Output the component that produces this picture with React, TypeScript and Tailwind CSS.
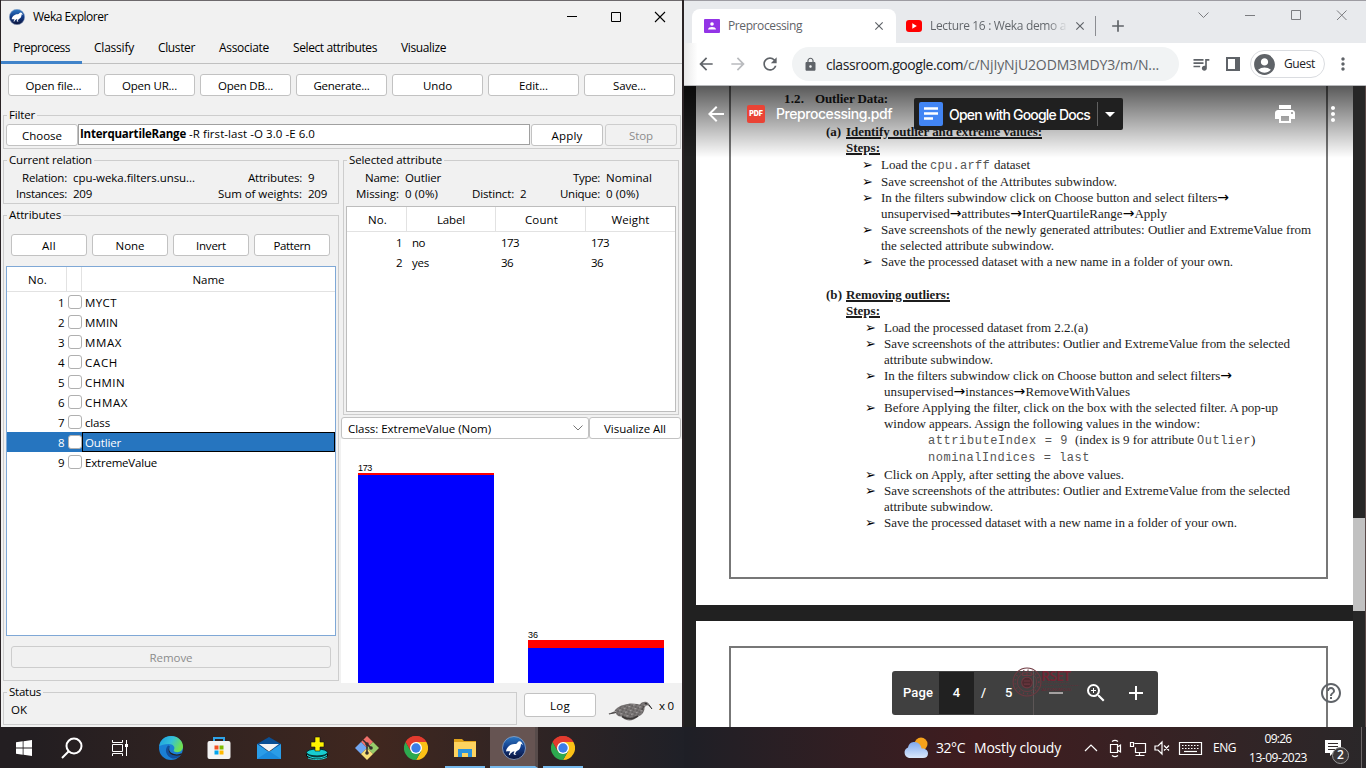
import { useLayoutEffect, useRef, useState, type ReactNode } from "react";
import {
  MdAccountCircle, MdAdd, MdArrowBack, MdArrowDropDown, MdArrowForward, MdClose, MdHelpOutline, MdLock,
  MdMoreVert, MdPrint, MdQueueMusic, MdRefresh, MdRemove, MdZoomIn,
} from "react-icons/md";

/** Text set to a given measure by adjusting its letter spacing. */
function Fit({ w, className = "", children }: { w: number; className?: string; children: string }) {
  const ref = useRef<HTMLSpanElement>(null);
  const [spacing, setSpacing] = useState(0);
  useLayoutEffect(() => {
    if (ref.current) setSpacing((w - ref.current.getBoundingClientRect().width) / children.length);
  }, [w, children]);
  return (
    <span ref={ref} className={`inline-block whitespace-pre ${className}`} style={{ letterSpacing: spacing }}>
      {children.split(/(→)/).map((part, i) =>
        part === "→" ? <span key={i} className="font-['DejaVu_Sans',sans-serif] text-[14px] leading-none text-black">→</span> : part,
      )}
    </span>
  );
}

function Btn({ w, box, disabled, children }: { w: number; box: string; disabled?: boolean; children: string }) {
  return (
    <button
      className={`flex shrink-0 items-center justify-center rounded-[3px] border pt-[2px] ${box} ${
        disabled ? "border-[#cdcdcd] bg-[#f1f1f1] text-[#8c8c8c]" : "border-[#c2c2c2] bg-white text-black"
      }`}
    >
      <Fit w={w}>{children}</Fit>
    </button>
  );
}

function Group({ title, w, box, children }: { title: string; w: number; box: string; children: ReactNode }) {
  return (
    <fieldset className={`shrink-0 border border-[#cdcdcd] ${box}`}>
      <legend className="ml-[3px] h-4 px-[2px] leading-4">
        <Fit w={w}>{title}</Fit>
      </legend>
      {children}
    </fieldset>
  );
}

function WekaMark({ className }: { className: string }) {
  return (
    <svg viewBox="0 0 24 24" className={className}>
      <defs>
        <linearGradient id="wk" x1="0" y1="0" x2="0" y2="1">
          <stop offset="0" stopColor="#2c78c4" />
          <stop offset="0.5" stopColor="#123a86" />
          <stop offset="1" stopColor="#0b1238" />
        </linearGradient>
      </defs>
      <circle cx="12" cy="12" r="11.5" fill="url(#wk)" stroke="#8fa6c8" strokeWidth="0.8" />
      <path
        d="M4 15.500c.5-4 4-7.500 8.500-7.500 1.500 0 2.500-.5 3-1.500 1-1.500 3-1.700 4-.3l1.500 2.800-2-1.200c-.3 3.200-1 6.200-4.500 7.400l-1.500 2.300 1.500 1.300h-2.500l-.5-1.300 1-2h-1.500l-2.500 2-.7 1.800-1-.5.7-2 .8-1.200c-1.300-.4-2.800-.5-4.300-.1z"
        fill="#fff"
      />
    </svg>
  );
}

const attributes = [
  ["MYCT", 32], ["MMIN", 33], ["MMAX", 37], ["CACH", 33], ["CHMIN", 40], ["CHMAX", 43], ["class", 25], ["Outlier", 36], ["ExtremeValue", 72],
] as const;

function Kv({ k, kw, v, vw, box }: { k: string; kw: number; v: string; vw: number; box: string }) {
  return (
    <div className="flex h-4 items-center">
      <div className={`mr-[6px] flex justify-end ${box}`}><Fit w={kw}>{k}</Fit></div>
      <Fit w={vw}>{v}</Fit>
    </div>
  );
}

function WekaWindow() {
  return (
    <section className="flex h-[727px] w-[684px] shrink-0 bg-[#2a2325] pl-px font-['Open_Sans',sans-serif] text-[11.5px] leading-4 text-black">
      <div className="flex w-[681px] flex-col border-t border-[#6d696c] bg-[#f1f1f1]">
        <header className="flex h-[31px] items-center pl-2">
          <WekaMark className="size-4" />
          <Fit w={75} className="ml-2 pt-px text-[12px]">Weka Explorer</Fit>
          <svg viewBox="0 0 100 12" className="ml-auto mr-[16px] h-3 w-[100px] fill-none stroke-black">
            <path d="M1 5.500h10" />
            <path d="M45.500 1.500h9v9h-9z" />
            <path d="M89 1l10 10M99 1L89 11" strokeWidth="1.100" />
          </svg>
        </header>
        <nav className="flex h-8 shrink-0 border-b border-[#c0c0c0] text-[12px]">
          <div className="-mb-px flex w-[81px] items-center justify-center border-b-3 border-[#4083c9] pt-[3px]"><Fit w={57}>Preprocess</Fit></div>
          <div className="flex items-center gap-6 pl-3 pt-px"><Fit w={40}>Classify</Fit><Fit w={37}>Cluster</Fit><Fit w={50}>Associate</Fit><Fit w={84}>Select attributes</Fit><Fit w={45}>Visualize</Fit></div>
        </nav>
        <div className="mt-[10px] flex h-[22px] shrink-0 gap-[5px] pl-[7px]">
          <Btn box="w-[91px]" w={56}>Open file...</Btn>
          <Btn box="w-[91px]" w={55}>Open UR...</Btn>
          <Btn box="w-[91px]" w={55}>Open DB...</Btn>
          <Btn box="w-[91px]" w={56}>Generate...</Btn>
          <Btn box="w-[91px]" w={29}>Undo</Btn>
          <Btn box="w-[91px]" w={29}>Edit...</Btn>
          <Btn box="w-[91px]" w={33}>Save...</Btn>
        </div>
        <Group title="Filter" w={26} box="ml-[2px] mt-[11px] h-[42px] w-[678px]">
          <div className="mt-px flex h-[22px] pl-[2px]">
            <Btn box="w-[72px]" w={40}>Choose</Btn>
            <div className="mr-px flex h-[21px] w-[452px] items-center border border-[#a0a0a0] bg-white pb-px pl-px">
              <Fit w={106} className="font-bold">InterquartileRange</Fit>
              <Fit w={126} className="ml-[3px]">-R first-last -O 3.0 -E 6.0</Fit>
            </div>
            <Btn box="w-[72px] mr-[2px]" w={31}>Apply</Btn>
            <Btn box="w-[72px]" w={24} disabled>Stop</Btn>
          </div>
        </Group>
        <div className="mt-[3px] flex h-[531px] shrink-0 pl-[2px]">
          <div className="flex w-[338px] flex-col">
            <Group title="Current relation" w={83} box="h-[52px] w-[336px]">
              <div className="flex pt-[2px]">
                <div className="w-[220px]">
                  <Kv box="w-[63px]" k="Relation:" kw={45} v="cpu-weka.filters.unsu..." vw={122} />
                  <Kv box="w-[63px]" k="Instances:" kw={51} v="209" vw={19} />
                </div>
                <div className="-ml-1">
                  <Kv box="w-[82px]" k="Attributes:" kw={54} v="9" vw={6} />
                  <Kv box="w-[82px]" k="Sum of weights:" kw={84} v="209" vw={19} />
                </div>
              </div>
            </Group>
            <Group title="Attributes" w={52} box="mt-[3px] h-[474px] w-[336px]">
              <div className="mt-[11px] flex h-[22px] gap-[5px] pl-[7px]">
                <Btn box="w-[76px]" w={14}>All</Btn>
                <Btn box="w-[76px]" w={29}>None</Btn>
                <Btn box="w-[76px]" w={30}>Invert</Btn>
                <Btn box="w-[76px]" w={37}>Pattern</Btn>
              </div>
              <div className="ml-[2px] mt-[10px] h-[370px] w-[330px] border border-[#7fa8d6] bg-white">
                <div className="flex h-[25px] border-b border-[#e2e2e2] *:flex *:items-center *:justify-center *:pt-[2px]">
                  <div className="w-[60px] border-r border-[#e2e2e2] pl-[2px]"><Fit w={19}>No.</Fit></div>
                  <div className="w-[15px] border-r border-[#e2e2e2]" />
                  <div className="flex-1"><Fit w={32}>Name</Fit></div>
                </div>
                {attributes.map(([name, w], i) => (
                  <div key={name} className={`flex h-5 items-center ${i === 7 ? "bg-[#2675bf] text-white" : ""}`}>
                    <div className="w-[57px] pt-px text-right"><Fit w={6}>{String(i + 1)}</Fit></div>
                    <div className="ml-1 h-[14px] w-[14px] rounded-[3px] border border-[#b0b0b0] bg-white" />
                    <div className={`flex h-5 flex-1 items-center border pl-[2px] pt-px ${i === 7 ? "border-black" : "border-transparent"}`}>
                      <Fit w={w}>{name}</Fit>
                    </div>
                  </div>
                ))}
              </div>
              <div className="ml-[7px] mt-[10px] flex h-[22px]"><Btn box="w-[320px]" w={43} disabled>Remove</Btn></div>
            </Group>
          </div>
          <div className="flex flex-1 flex-col">
            <Group title="Selected attribute" w={93} box="ml-[2px] h-[263px] w-[336px]">
              <div className="flex pt-[2px]">
                <div className="w-[110px]">
                  <Kv box="w-[55px]" k="Name:" kw={34} v="Outlier" vw={36} />
                  <Kv box="w-[55px]" k="Missing:" kw={43} v="0 (0%)" vw={33} />
                </div>
                <div className="w-[90px] pt-4"><Kv box="w-[60px]" k="Distinct:" kw={42} v="2" vw={6} /></div>
                <div>
                  <Kv box="w-[56px]" k="Type:" kw={27} v="Nominal" vw={46} />
                  <Kv box="w-[56px]" k="Unique:" kw={40} v="0 (0%)" vw={33} />
                </div>
              </div>
              <div className="ml-[2px] mt-1 h-[206px] w-[330px] border border-[#bdbdbd] bg-white">
                <div className="grid h-[25px] grid-cols-[60px_89px_90px_89px] border-b border-[#e2e2e2] *:flex *:items-center *:justify-center *:border-r *:border-[#e2e2e2] *:pt-[2px]">
                  <div className="pl-[2px]"><Fit w={19}>No.</Fit></div><div><Fit w={28}>Label</Fit></div><div className="pl-[2px]"><Fit w={33}>Count</Fit></div>
                  <div className="border-r-0!"><Fit w={38}>Weight</Fit></div>
                </div>
                {[["1", "no", "173", 13, 18], ["2", "yes", "36", 17, 12]].map(([n, l, c, lw, cw]) => (
                  <div key={n} className="grid h-5 grid-cols-[55px_94px_90px_89px] items-center pt-[2px]">
                    <div className="text-right"><Fit w={6}>{String(n)}</Fit></div>
                    <div className="pl-[10px]"><Fit w={Number(lw)}>{String(l)}</Fit></div>
                    <div className="pl-[5px]"><Fit w={Number(cw)}>{String(c)}</Fit></div>
                    <div className="pl-[5px]"><Fit w={Number(cw)}>{String(c)}</Fit></div>
                  </div>
                ))}
              </div>
            </Group>
            <div className="mt-[2px] flex h-[22px] shrink-0">
              <div className="flex w-[248px] items-center justify-between rounded-[3px] border border-[#c2c2c2] bg-white pl-[6px] pr-[5px]">
                <Fit w={143} className="pt-[2px]">Class: ExtremeValue (Nom)</Fit>
                <svg viewBox="0 0 10 6" className="h-[6px] w-[10px] fill-none stroke-[#777]"><path d="M.5.500L5 5 9.500.500" /></svg>
              </div>
              <Btn box="w-[92px]" w={62}>Visualize All</Btn>
            </div>
            <div className="flex flex-1 items-end gap-[34px] bg-white pl-[17px] font-['Liberation_Sans',sans-serif] text-[9px] leading-[9px]">
              <div className="w-[136px]">
                <Fit w={14} className="align-bottom">173</Fit>
                <div className="h-[2px] bg-[#f00]" /><div className="h-[208px] bg-[#00f]" />
              </div>
              <div className="w-[136px]">
                <Fit w={10} className="align-bottom">36</Fit>
                <div className="h-2 bg-[#f00]" /><div className="h-[35px] bg-[#00f]" />
              </div>
            </div>
          </div>
        </div>
        <footer className="flex flex-1 pl-[2px] pt-px">
          <Group title="Status" w={32} box="h-[41px] w-[514px]">
            <div className="pl-[7px] pt-[2px]"><Fit w={16}>OK</Fit></div>
          </Group>
          <div className="ml-[7px] mt-[9px] flex h-6"><Btn box="w-[72px]" w={20}>Log</Btn></div>
          <svg viewBox="0 0 45 21" className="ml-3 mt-[17px] h-[21px] w-[45px]">
            <defs>
              <pattern id="feather" width="5" height="4" patternUnits="userSpaceOnUse" patternTransform="rotate(-20)">
                <rect width="5" height="4" fill="#7b7777" /><path d="M0 1h2M3 3h2" stroke="#4b4848" strokeWidth=".9" /><path d="M2 .5h2" stroke="#aaa6a6" strokeWidth=".8" />
              </pattern>
            </defs>
            <path d="M0 13l6-2.500c2-3 5-5.500 9-6.500 5-1.500 9-2 14-1l3 .5c1-2 3-3 5.500-2.800 2 .1 3.300 1.300 4 3l2.500 4-4-3.400c-2 .2-3.500 1.200-3.500 3.200-.3 4-3 7-7 8.500-2 1.800-5 3.500-8.500 3.500-3-.2-6-2-7.500-4-3 .4-5-1-5.500-3.500l-2 .2z" fill="url(#feather)" />
            <path d="M14 15.500c5 3 11 2.500 16-.5" stroke="#3a3737" fill="none" strokeWidth="1.500" /><path d="M1 13l7-1.500M36 5l-2 4" stroke="#4a4747" fill="none" /><circle cx="38" cy="2.800" r=".8" fill="#111" /><path d="M41 4l3 4" stroke="#222" />
          </svg>
          <Fit w={15} className="ml-[6px] mt-[14px]">x 0</Fit>
        </footer>
      </div>
    </section>
  );
}

function Line({ w, bullet, pad, children }: { w: number; bullet?: boolean; pad: string; children: string }) {
  return (
    <div className={`flex h-4 items-center ${pad}`}>
      <span className="w-[19px] shrink-0 font-['DejaVu_Sans',sans-serif] text-[13px] text-black">{bullet ? "➢" : ""}</span>
      <Fit w={w}>{children}</Fit>
    </div>
  );
}

function Mono({ w, className = "", children }: { w: number; className?: string; children: string }) {
  return <Fit w={w} className={`pt-[2px] font-['Liberation_Mono',monospace] text-[12px] text-[#555] ${className}`}>{children}</Fit>;
}

function DocumentText() {
  const a = "pl-[131px]";
  const b = "pl-[134px]";
  return (
    <div className="pt-[5px] font-['Liberation_Serif',serif] text-[13px] leading-4 text-[#1c1c1c]">
      <div className="mb-[17px] flex h-4 gap-[11px] pl-[53px] font-bold"><Fit w={20}>1.2.</Fit><Fit w={73}>Outlier Data:</Fit></div>
      <div className="flex h-4 pl-[95px] font-bold"><Fit w={15} className="mr-[5px]">(a)</Fit><Fit w={196} className="underline decoration-2">Identify outlier and extreme values:</Fit></div>
      <div className="mb-px h-4 pl-[115px] font-bold"><Fit w={34} className="underline decoration-2">Steps:</Fit></div>
      <div className="mb-px flex h-4 items-center">
        <Line pad={a} bullet w={46}>Load the</Line>
        <Mono w={60} className="ml-[3px]">cpu.arff</Mono>
        <Fit w={36} className="ml-[4px]">dataset</Fit>
      </div>
      <Line pad={a} bullet w={236}>Save screenshot of the Attributes subwindow.</Line>
      <Line pad={a} bullet w={348}>In the filters subwindow click on Choose button and select filters→</Line>
      <Line pad={a} w={286}>unsupervised→attributes→InterQuartileRange→Apply</Line>
      <Line pad={a} bullet w={430}>Save screenshots of the newly generated attributes: Outlier and ExtremeValue from</Line>
      <Line pad={a} w={173}>the selected attribute subwindow.</Line>
      <Line pad={a} bullet w={352}>Save the processed dataset with a new name in a folder of your own.</Line>
      <div className="mt-[17px] flex h-4 pl-[95px] font-bold"><Fit w={16} className="mr-[4px]">(b)</Fit><Fit w={104} className="underline decoration-2">Removing outliers:</Fit></div>
      <div className="mb-px h-4 pl-[115px] font-bold"><Fit w={34} className="underline decoration-2">Steps:</Fit></div>
      <Line pad={b} bullet w={204}>Load the processed dataset from 2.2.(a)</Line>
      <Line pad={b} bullet w={406}>Save screenshots of the attributes: Outlier and ExtremeValue from the selected</Line>
      <Line pad={b} w={109}>attribute subwindow.</Line>
      <Line pad={b} bullet w={348}>In the filters subwindow click on Choose button and select filters→</Line>
      <Line pad={b} w={246}>unsupervised→instances→RemoveWithValues</Line>
      <Line pad={b} bullet w={394}>Before Applying the filter, click on the box with the selected filter. A pop-up</Line>
      <Line pad={b} w={316}>window appears. Assign the following values in the window:</Line>
      <div className="mb-px flex h-4 items-center pl-[197px]">
        <Mono w={140}>attributeIndex = 9</Mono>
        <Fit w={119} className="ml-[7px]">(index is 9 for attribute</Fit>
        <Mono w={54} className="ml-[3px]">Outlier</Mono>
        <span>)</span>
      </div>
      <div className="mb-[2px] flex h-4 items-center pl-[197px]"><Mono w={162}>nominalIndices = last</Mono></div>
      <Line pad={b} bullet w={240}>Click on Apply, after setting the above values.</Line>
      <Line pad={b} bullet w={406}>Save screenshots of the attributes: Outlier and ExtremeValue from the selected</Line>
      <Line pad={b} w={109}>attribute subwindow.</Line>
      <Line pad={b} bullet w={353}>Save the processed dataset with a new name in a folder of your own.</Line>
    </div>
  );
}

function BrowserWindow() {
  return (
    <section className="flex h-[727px] w-[682px] flex-col border-t border-[#9d9ca2] bg-[#e8eaed] font-['Open_Sans',sans-serif] text-[12px] text-[#5f6368]">
      <div className="flex h-[42px] shrink-0 pl-2">
        <div className="mt-2 flex w-[204px] items-center rounded-t-lg bg-white pl-3">
          <svg viewBox="0 0 16 14" className="h-[14px] w-4"><rect width="16" height="14" rx="1" fill="#9334e6" /><circle cx="8" cy="5" r="1.800" fill="#fff" /><path d="M4 10.500c0-3.300 8-3.300 8 0z" fill="#fff" /></svg>
          <Fit w={74} className="ml-2">Preprocessing</Fit>
          <MdClose className="ml-auto mr-[10px] size-[14px]" />
        </div>
        <div className="mt-2 flex w-[201px] items-center border-r border-transparent pl-[10px]">
          <svg viewBox="0 0 16 12" className="h-3 w-4"><rect width="16" height="12" rx="3" fill="#f00" /><path d="M6.300 3.300v5.400L10.800 6z" fill="#fff" /></svg>
          <div className="ml-2 w-[138px] overflow-hidden bg-linear-to-r from-[#5f6368] from-85% to-transparent bg-clip-text text-transparent"><Fit w={136}>Lecture 16 : Weka demo a</Fit></div>
          <MdClose className="ml-[5px] size-[14px]" />
        </div>
        <div className="ml-[-2px] mt-[15px] h-5 w-px bg-[#8b8d92]" />
        <MdAdd className="ml-[12px] mt-[15px] size-5" />
        <svg viewBox="0 0 150 12" className="ml-auto mr-[18px] mt-2 h-3 w-[150px] fill-none stroke-[#7b7c80]"><path d="M.5 3.500L5.500 8.500 10.500 3.500M47 6.500h10M93.500 1.500h9v9h-9zM139 1.500l9.500 9.500M148.500 1.500L139 11" /></svg>
      </div>
      <div className="flex h-[43px] shrink-0 items-center border-b border-[#b8b9bc] bg-white bg-linear-to-r from-[#e9e9e9] to-white to-[2%]">
        <MdArrowBack className="ml-[12px] size-5" />
        <MdArrowForward className="ml-3 size-5 text-[#b9bbbe]" />
        <MdRefresh className="ml-3 size-5" />
        <div className="ml-[12px] flex h-[34px] w-[387px] items-center rounded-full bg-[#f1f3f4] pl-[11px] text-[14px]">
          <MdLock className="size-[15px]" />
          <Fit w={137} className="ml-2 text-[#202124]">classroom.google.com</Fit>
          <Fit w={196}>/c/NjIyNjU2ODM3MDY3/m/N...</Fit>
        </div>
        <MdQueueMusic className="ml-[12px] size-5 shrink-0" />
        <svg viewBox="0 0 14 14" className="ml-[15px] size-[14px] shrink-0 fill-none stroke-[#5f6368]"><path d="M1 1h12v12H1z" strokeWidth="2" /><path d="M11 1v12" strokeWidth="4" /></svg>
        <div className="ml-[10px] flex h-7 w-[75px] shrink-0 items-center rounded-full border border-[#dadce0] bg-white pl-[1px] text-[#202124]">
          <MdAccountCircle className="size-[25px] shrink-0 text-[#5f6368]" /><Fit w={31} className="ml-[7px]">Guest</Fit>
        </div>
        <MdMoreVert className="ml-[8px] size-5 shrink-0" />
      </div>
      <div className="relative flex flex-1 overflow-hidden bg-[#212121] pl-3">
        <div className="flex w-[657px] shrink-0 flex-col gap-4">
          <div className="h-[519px] shrink-0 bg-white pl-[33px]">
            <div className="h-[493px] w-[599px] border-2 border-t-0 border-[#777]"><DocumentText /></div>
          </div>
          <div className="h-[106px] shrink-0 overflow-hidden bg-white pl-[33px] pt-[25px]">
            <div className="h-[100px] w-[599px] border-2 border-[#777]" />
          </div>
        </div>
        <div className="flex-1 border-r border-[#5a4a49] bg-[#272727] pt-[432px]"><div className="h-[93px] bg-[#c1c1c1]" /></div>
        <div className="absolute inset-x-0 top-0 h-[72px] w-[669px] bg-linear-to-b from-black/65 to-transparent" />
        <div className="absolute left-0 top-3 flex h-8 w-[669px] items-center font-['Inter',sans-serif] text-[14px] text-white">
          <MdArrowBack className="ml-[20px] mr-[18px] size-6" />
          <div className="ml-[1px] flex size-[18px] items-center justify-center rounded-[2px] bg-[#ea4335] text-[7px] font-black">PDF</div>
          <Fit w={116} className="-mt-px ml-[11px] font-medium">Preprocessing.pdf</Fit>
          <div className="ml-[22px] flex h-8 w-[209px] items-center rounded-[2px] bg-[#202020] pl-[5px]">
            <svg viewBox="0 0 24 24" className="size-6"><rect width="24" height="24" rx="2" fill="#4285f4" /><path d="M5 6.500h14M5 11.500h14M5 16.500h9" stroke="#fff" strokeWidth="2.500" /></svg>
            <Fit w={141} className="ml-[6px] font-medium">Open with Google Docs</Fit>
            <div className="ml-[7px] h-6 w-px bg-[#606060]" /><MdArrowDropDown className="size-6" />
          </div>
          <MdPrint className="ml-[150px] size-6" />
          <MdMoreVert className="ml-6 size-6 shrink-0" />
        </div>
        <div className="absolute left-[208px] top-[585px] flex h-11 w-[266px] items-center rounded-[3px] bg-[#404040] font-['Roboto',sans-serif] text-[13px] font-medium text-white">
          <Fit w={30} className="ml-[11px]">Page</Fit>
          <div className="ml-[6px] flex h-[42px] w-[35px] items-center justify-center bg-[#212121]">4</div>
          <span className="ml-[7px]">/</span><span className="ml-[19px]">5</span>
          <div className="ml-[21px] h-11 w-px bg-[#5c5656]" />
          <MdRemove className="ml-[10px] size-6 text-[#a4a0a0]" /><MdZoomIn className="ml-[16px] size-6" /><MdAdd className="ml-[16px] size-6" />
        </div>
        <div className="absolute left-[328px] top-[581px] flex items-start">
          <svg viewBox="0 0 28 28" className="size-[30px] fill-none stroke-[#6e3840]"><circle cx="14" cy="14" r="13" /><circle cx="14" cy="14" r="9" strokeWidth=".8" /><circle cx="14" cy="14.500" r="5" fill="#4e2a30" /><path d="M10 5v3h8V5M14 4v4M11 13h6M11 16h6" /><circle cx="14" cy="14" r="11" strokeDasharray="1 3" strokeWidth="1.500" /></svg>
          <div className="-ml-px flex w-[42px] flex-col gap-px pt-[3px] text-[#742634]">
            <div className="h-[11px] font-['Noto_Sans',sans-serif] text-[14px] font-semibold leading-[11px]"><Fit w={29} className="align-top">RSET</Fit></div>
            <div className="h-[2px] overflow-hidden text-[2px] leading-[2px]"><Fit w={28} className="align-top">RAJAGIRI SCHOOL OF</Fit></div>
            <div className="h-[2px] overflow-hidden text-[2px] leading-[2px]"><Fit w={39} className="align-top">ENGINEERING &amp; TECHNOLOGY</Fit></div>
            <div className="h-[4px] overflow-hidden text-[4px] leading-[4px]"><Fit w={30} className="align-top">(AUTONOMOUS)</Fit></div>
          </div>
        </div>
        <MdHelpOutline className="absolute left-[635px] top-[595px] size-6" />
      </div>
    </section>
  );
}

function Chrome() {
  return (
    <svg viewBox="0 0 24 24" className="size-6">
      <path d="M12 12L1.600 6A12 12 0 0 1 22.400 6z" fill="#e33b2e" /><path d="M12 12V6h10.400A12 12 0 0 1 12 24l5.200-9z" fill="#fbc116" /><path d="M6.800 15L1.600 6A12 12 0 0 0 12 24l5.200-9z" fill="#2da94f" /><path d="M12 6h10.400A12 12 0 0 0 1.600 6l5.200 9z" fill="#e33b2e" />
      <circle cx="12" cy="12" r="6" fill="#fff" /><circle cx="12" cy="12" r="4.700" fill="#3b7de8" />
    </svg>
  );
}

function Taskbar() {
  return (
    <footer className="flex h-[41px] w-[1366px] bg-linear-to-r from-[#251f21] via-[#25202a] via-50% to-[#28262a] font-['Open_Sans',sans-serif] text-white">
      <div className="flex w-[684px] bg-linear-to-r from-[#231e21] from-5% via-[#40271f] via-55% to-[#1f2027] *:flex *:h-[41px] *:shrink-0 *:items-center *:justify-center">
        <div className="w-12"><svg viewBox="0 0 16 16" className="size-4 fill-white"><path d="M0 2.200L6.700 1.300v6.300H0zM7.500 1.200L16 0v7.600H7.500zM0 8.400h6.700v6.300L0 13.800zM7.500 8.400H16V16l-8.500-1.200z" /></svg></div>
        <div className="w-12"><svg viewBox="0 0 22 22" className="size-[22px] fill-none stroke-white stroke-2"><circle cx="13" cy="9" r="7.500" /><path d="M7.500 14.500L1 21" /></svg></div>
        <div className="w-12"><svg viewBox="0 0 16 16" className="size-4 fill-none stroke-white"><path d="M.5 0v2.500h10V0M.5 4.500h10v7H.500zM.5 16v-2.500h10V16M14.500 0v16" /><path d="M13 4h3v3h-3z" fill="#fff" stroke="none" /></svg></div>
        <div className="w-[54px]">
          <svg viewBox="0 0 24 24" className="size-6">
            <defs><linearGradient id="eg" x1="0" y1="0" x2="1" y2=".4"><stop stopColor="#1b9de2" /><stop offset=".55" stopColor="#35c1d8" /><stop offset="1" stopColor="#6ee052" /></linearGradient></defs>
            <circle cx="12" cy="12" r="12" fill="#1a7fd4" />
            <path d="M.3 10C1 4 6 0 12 0c7 0 12 5 12 10.500 0 4-3 5.700-5.500 5.700-3 0-4.300-1.200-3.700-2.200 2-3-1-6-5-6-4.500 0-8 1.500-9.500 2z" fill="url(#eg)" />
            <path d="M9 9.500c-4 4-2 11 4.500 13 3.500.500 7-1 8.500-4-6 2.500-12 0-12.500-4-.1-2 .5-3.500 1.500-4.300z" fill="#114f9e" />
            <path d="M11 10.500c-1.500 2-1.500 6 4 7.500 3 .8 6 .3 8-1.200l-1 2.200c-3 1-6 1-8.500 0-4.500-2-5-6-2.500-8.500z" fill="#241f22" />
          </svg>
        </div>
        <div className="w-[42px]"><svg viewBox="0 0 24 24" className="size-6"><path d="M7 6V2h10v4" fill="none" stroke="#2ea3e8" strokeWidth="2" /><rect x=".5" y="5" width="23" height="18" rx="2" fill="#f3f3f3" /><path d="M7.500 9.500h4v4h-4z" fill="#f25022" /><path d="M12.500 9.500h4v4h-4z" fill="#7fba00" /><path d="M7.500 14.500h4v4h-4z" fill="#00a4ef" /><path d="M12.500 14.500h4v4h-4z" fill="#ffb900" /></svg></div>
        <div className="w-[58px]"><svg viewBox="0 0 24 24" className="size-6"><path d="M0 8l12-7 12 7v5H0z" fill="#0a4f94" /><path d="M0 8v15h24V8l-12 8z" fill="#2a9de8" /><path d="M0 23l12-8 12 8z" fill="#1683d8" opacity=".7" /><path d="M2 8h20L12 15.500z" fill="#f4f4f4" /></svg></div>
        <div className="w-[40px]"><svg viewBox="0 0 24 24" className="size-6"><ellipse cx="11" cy="19" rx="10.500" ry="4" fill="#0a4747" stroke="#000" /><ellipse cx="11" cy="16.500" rx="10.500" ry="3.500" fill="#18cdd0" stroke="#042a2a" /><path d="M1 19c4 4 16 4 20 0M2 22c4 2 15 2 19-1" stroke="#20d9dc" fill="none" /><path d="M9 1h5v5h4v5h-4v4H9v-4H5V6h4z" fill="#fff200" stroke="#111" strokeWidth=".6" /></svg></div>
        <div className="w-[58px]"><svg viewBox="0 0 24 24" className="size-6"><path d="M12 0l6 6-6 6-6-6z" fill="#f0706a" /><path d="M6 6l6 6-6 6-6-6z" fill="#72a7f2" /><path d="M18 6l6 6-6 6-6-6z" fill="#97cc6b" /><path d="M12 12l6 6-6 6-6-6z" fill="#f7df78" /><path d="M8 4l4 4v10M12 8l4 4" stroke="#332d2d" strokeWidth="1.500" fill="none" /><circle cx="12" cy="8" r="1.800" fill="#332d2d" /><circle cx="16" cy="12" r="1.800" fill="#332d2d" /><circle cx="12" cy="17" r="1.800" fill="#332d2d" /></svg></div>
        <div className="w-10"><Chrome /></div>
        <div className="ml-[9px] w-10 border-b-2 border-[#76b9ed]">
          <svg viewBox="0 0 24 24" className="mt-[2px] size-6"><path d="M1 3h8l2 2h12v15H1z" fill="#e0a21a" /><path d="M1 6h22v15H1z" fill="#fdd35f" /><path d="M5 13h14v8h-4v-4H9v4H5z" fill="#2c93dc" /></svg>
        </div>
        <div className="ml-[5px] w-12 border-b-2 border-r-3 border-b-[#76b9ed] border-r-[#574b4a] bg-[#665452] pl-[2px]"><WekaMark className="mt-[2px] size-6" /></div>
        <div className="ml-[5px] w-10 border-b-2 border-[#76b9ed]"><div className="mt-[2px]"><Chrome /></div></div>
      </div>
      <div className="flex w-[682px] items-center bg-linear-to-r from-[#1e1f26] via-[#401c1f] via-43% to-[#2a2729]">
        <svg viewBox="0 0 26 22" className="ml-[219px] h-[22px] w-[26px]"><defs><linearGradient id="cl" x1="0" y1="0" x2="0" y2="1"><stop stopColor="#7fa9ee" /><stop offset="1" stopColor="#dbe8fb" /></linearGradient></defs><circle cx="18" cy="7" r="6.500" fill="#f6a21b" /><path d="M6 21a5.500 5.500 0 0 1-1-10.500C6 6 9 5 11.500 5c4 0 6.500 3 7 6.500 4-.5 6.500 2 6.500 5s-2 4.500-5 4.500z" fill="url(#cl)" /></svg>
        <Fit w={29} className="ml-[7px] text-[14px]">32°C</Fit>
        <Fit w={87} className="ml-[9px] text-[14px]">Mostly cloudy</Fit>
        <svg viewBox="0 0 120 20" className="ml-[23px] h-5 w-[120px] fill-none stroke-white stroke-[1.200]">
          <path d="M1 13l6-6 6 6" />
          <path d="M26.500 6.500h7v8h-7zM33.500 9l3-2v7l-3-2M28 3.500c2-1.500 4-1.500 6 0M28 17.500c2 1.500 4 1.500 6 0" />
          <path d="M50.500 5.500h11v9h-10v-5M55.500 14.500v3M51.500 17.500h9M46.500 4.500h3v4h-3z" />
          <path d="M71 8h3l4-4v12l-4-4h-3zM80 7.500l5 5M85 7.500l-5 5" />
          <path d="M95.500 4.500h22v12h-22z" /><path d="M98 7.500h17M98 10.500h17" strokeDasharray="1.500 1.500" /><path d="M100 13.500h13" />
        </svg>
        <Fit w={23} className="ml-[9px] text-[12px]">ENG</Fit>
        <div className="ml-[12px] flex w-[60px] flex-col items-center text-[12px] leading-[19px]"><Fit w={27}>09:26</Fit><Fit w={58}>13-09-2023</Fit></div>
        <div className="relative ml-[17px] mt-[9px] h-6 w-6"><svg viewBox="0 0 24 24" className="size-6"><path d="M0 0h16v13H8l-3 3v-3H0z" fill="#fff" /><path d="M3 3.500h10M3 6.500h10M3 9.500h7" stroke="#332b2c" /><circle cx="15.500" cy="15.500" r="8" fill="#3b3738" stroke="#999" /></svg><span className="absolute left-[12px] top-[7px] text-[12px] font-semibold leading-4">2</span></div>
        <div className="ml-auto mr-1 h-[41px] w-px bg-[#6d6869]" />
      </div>
    </footer>
  );
}

export default function App() {
  return (
    <main className="flex h-[768px] w-[1366px] flex-col overflow-hidden">
      <div className="flex h-[727px]"><WekaWindow /><BrowserWindow /></div>
      <Taskbar />
    </main>
  );
}
